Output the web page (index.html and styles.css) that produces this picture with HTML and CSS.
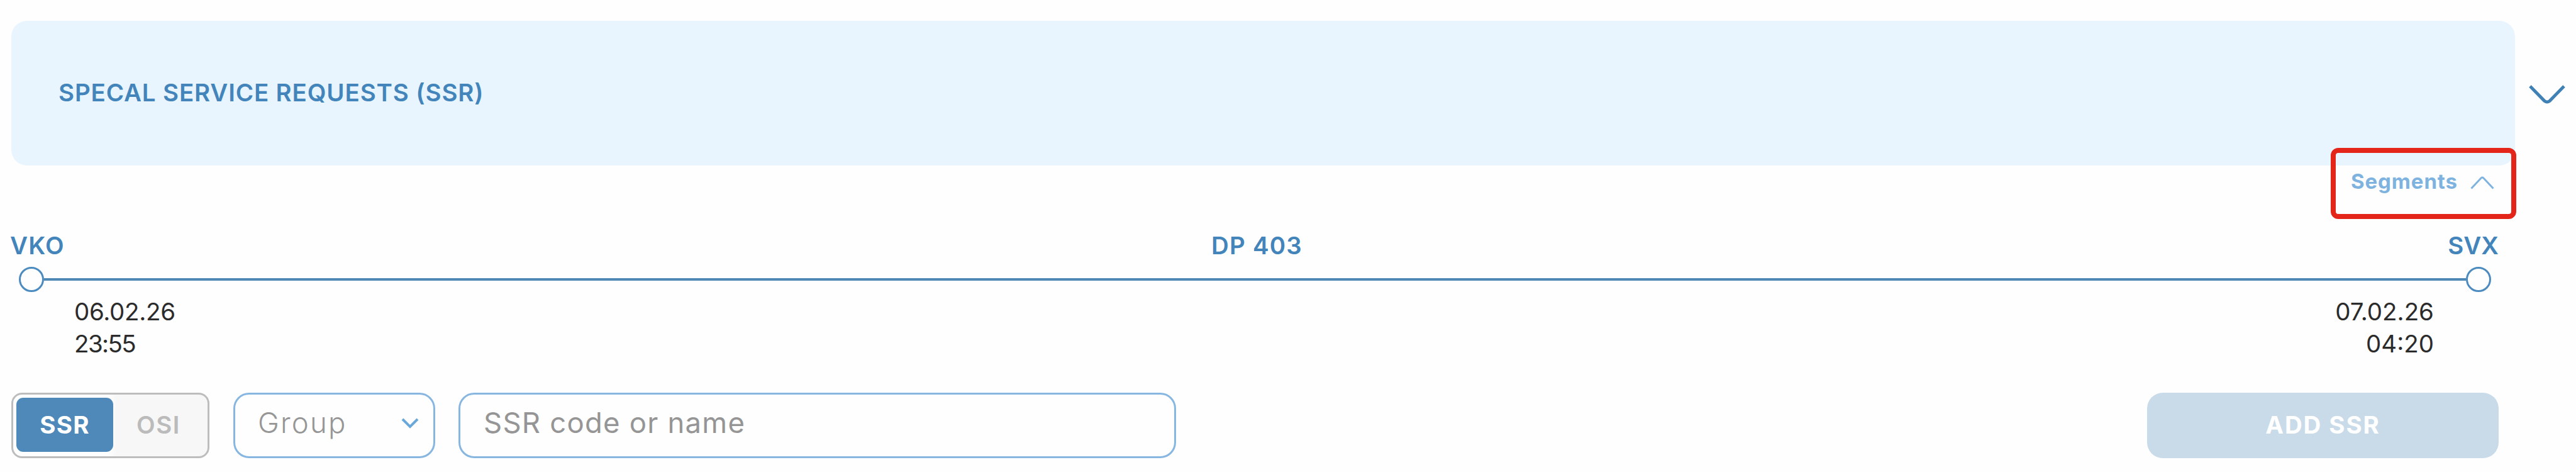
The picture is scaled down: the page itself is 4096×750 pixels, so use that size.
FILE: index.html
```html
<!DOCTYPE html>
<html lang="en">
<head>
<meta charset="utf-8">
<title>Special service requests</title>
<link rel="stylesheet" href="styles.css">
</head>
<body>
<main class="page">
  <header class="head">
    <div class="banner"><h1 class="title">SPECAL SERVICE REQUESTS (SSR)</h1></div>
    <svg class="head-chevron" viewBox="0 0 58 30"><path d="M2 2 L25 25.5 Q29 28.5 33 25.5 L56 2"/></svg>
  </header>
  <div class="segments">
    <span class="segments-label">Segments</span>
    <svg class="segments-chevron" viewBox="0 0 38 21"><path d="M1.5 19.5 L17 3 Q19 1 21 3 L36.5 19.5"/></svg>
    <div class="highlight"></div>
  </div>
  <section class="route">
    <div class="points">
      <span class="from">VKO</span>
      <span class="flight">DP 403</span>
      <span class="to">SVX</span>
    </div>
    <div class="track"><i class="dot"></i><i class="line"></i><i class="dot"></i></div>
    <div class="times">
      <div class="time"><span class="date">06.02.26</span><span class="clock">23:55</span></div>
      <div class="time time-end"><span>07.02.26</span><span>04:20</span></div>
    </div>
  </section>
  <div class="controls">
    <div class="toggle">
      <div class="option option-on">SSR</div>
      <div class="option option-off">OSI</div>
    </div>
    <div class="field group">
      <span class="group-text">Group</span>
      <svg class="group-chevron" viewBox="0 0 28 17"><path d="M2 2 L14 14 L26 2"/></svg>
    </div>
    <div class="field search"><span class="search-text">SSR code or name</span></div>
    <div class="add">ADD SSR</div>
  </div>
</main>
</body>
</html>
```
FILE: styles.css
```css
* { box-sizing: border-box; }
body { margin: 0; background: #fefefe; font-family: Inter, "Open Sans", sans-serif; color: #2b2b2b; }
.page { width: 4096px; height: 750px; padding: 33px 18px 0; overflow: hidden; white-space: nowrap; }

.head { display: flex; align-items: center; height: 230px; }
.banner { display: flex; flex: none; align-items: center; width: 3981px; height: 230px; padding: 0 0 2px 75px; border-radius: 25px; background: #e8f5ff; }
.title { margin: 0; font-size: 38.5px; font-weight: 600; line-height: 50px; letter-spacing: 0.85px; color: #4385ba; }
.head-chevron { flex: none; width: 58px; height: 30px; margin: 4px 0 0 22px; fill: none; stroke: #3f80b5; stroke-width: 5; }

.segments { position: relative; display: flex; align-items: center; justify-content: flex-end; height: 50px; padding-right: 112px; }
.segments-label { font-size: 33px; font-weight: 700; letter-spacing: 0.9px; color: #7eb3e0; }
.segments-chevron { width: 38px; height: 21px; margin: 4px 0 0 20px; fill: none; stroke: #7eb3e0; stroke-width: 3; }
.highlight { position: absolute; top: -28px; right: 77px; width: 295px; height: 113px; border: 8px solid #e32619; border-radius: 12px; }

.route { width: 3955px; }
.points { display: flex; justify-content: space-between; margin-top: 52px; font-size: 38.5px; font-weight: 600; line-height: 50px; color: #4385ba; }
.from { margin-left: -2px; letter-spacing: 1.2px; }
.flight { margin-left: 2px; letter-spacing: 1.2px; }
.track { display: flex; align-items: center; height: 40px; margin-top: 9px; padding: 0 12px; }
.dot { width: 40px; height: 40px; border: 3px solid #4b8bbf; border-radius: 50%; }
.line { flex: 1; height: 4px; background: #4e89b5; }
.times { display: flex; justify-content: space-between; padding: 6px 103px 0 100px; font-size: 38.5px; line-height: 51px; }
.time { display: flex; flex-direction: column; align-items: flex-start; }
.time-end { align-items: flex-end; }
.date { letter-spacing: -0.3px; }
.clock { letter-spacing: -1.6px; }

.controls { display: flex; width: 3955px; height: 104px; margin-top: 52px; }
.toggle { display: flex; width: 315px; padding: 5px 0 7px 5px; border: 3px solid #bdbdbd; border-radius: 17px; background: linear-gradient(90deg, #fefefe 150px, #f7f7f7 165px); }
.option { display: flex; align-items: center; justify-content: center; height: 86px; font-size: 38.5px; line-height: 50px; }
.option-on { width: 154px; border-radius: 11px; background: #4e89b9; color: #fff; font-weight: 700; letter-spacing: 1.2px; }
.option-off { width: 144px; color: #bbb; font-weight: 600; letter-spacing: 1.6px; }
.field { display: flex; align-items: center; height: 104px; padding-bottom: 8px; border: 3px solid #87b7e1; border-radius: 25px; font-size: 45.5px; line-height: 60px; }
.group { justify-content: space-between; width: 321px; margin-left: 38px; padding-left: 36px; padding-right: 23px; color: #969696; font-weight: 300; }
.group-text { letter-spacing: 2.2px; }
.group-chevron { width: 28px; height: 17px; fill: none; stroke: #69a8da; stroke-width: 4; }
.search { width: 1141px; margin-left: 37px; padding-left: 37px; color: #959595; }
.search-text { letter-spacing: 1.2px; }
.add { display: flex; align-items: center; justify-content: center; width: 559px; margin-left: auto; padding-bottom: 3px; border-radius: 25px; background: #c9dbe9; color: #fff; font-size: 38.5px; font-weight: 700; letter-spacing: 1.9px; }
```
